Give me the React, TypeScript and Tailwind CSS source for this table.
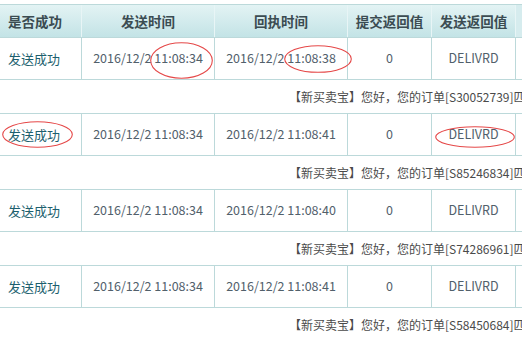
import React from "react";

const font = { fontFamily: '"Noto Sans CJK SC", "Noto Sans", sans-serif' };

const rows = [
  { send: "2016/12/2 11:08:34", recv: "2016/12/2 11:08:38", msg: "【新买卖宝】您好，您的订单[S30052739]匹配成功" },
  { send: "2016/12/2 11:08:34", recv: "2016/12/2 11:08:41", msg: "【新买卖宝】您好，您的订单[S85246834]匹配成功" },
  { send: "2016/12/2 11:08:34", recv: "2016/12/2 11:08:40", msg: "【新买卖宝】您好，您的订单[S74286961]匹配成功" },
  { send: "2016/12/2 11:08:34", recv: "2016/12/2 11:08:41", msg: "【新买卖宝】您好，您的订单[S58450684]匹配成功" },
];

function Ellipse({ x, y, w, h }: { x: number; y: number; w: number; h: number }) {
  return (
    <svg className="absolute pointer-events-none" style={{ left: x, top: y }} width={w} height={h}>
      <ellipse cx={w / 2} cy={h / 2} rx={w / 2 - 0.7} ry={h / 2 - 0.7} fill="none" stroke="#e54848" strokeWidth="1.1" />
    </svg>
  );
}

export default function App() {
  return (
    <div className="relative w-[522px] h-[339px] overflow-hidden bg-white pt-[4px] text-[13px]" style={font}>
      <div className="flex h-[34px] border-y border-[#bcd9da] bg-gradient-to-b from-[#e3f3f4] to-[#c3e3e6] font-bold text-[#3b4c52] text-[13.5px]">
        <div className="w-[82px] shrink-0 border-r border-[#e8f5f6] flex items-center pl-[8px]">是否成功</div>
        <div className="w-[133px] shrink-0 border-r border-[#e8f5f6] flex items-center justify-center">发送时间</div>
        <div className="w-[133px] shrink-0 border-r border-[#e8f5f6] flex items-center justify-center">回执时间</div>
        <div className="w-[84px] shrink-0 border-r border-[#e8f5f6] flex items-center justify-center">提交返回值</div>
        <div className="w-[84px] shrink-0 border-r border-[#e8f5f6] flex items-center justify-center">发送返回值</div>
        <div className="flex-1 bg-[#d6ecee]"></div>
      </div>
      {rows.map((r, i) => (
        <React.Fragment key={i}>
          <div className="flex h-[42px] border-b border-[#bcd9da] text-[#51606b] text-[12.5px]">
            <div className="w-[82px] shrink-0 border-r border-[#bcd9da] flex items-center pl-[8px] text-[#1d5f6e] text-[13px]">发送成功</div>
            <div className="w-[133px] shrink-0 border-r border-[#bcd9da] flex items-center justify-center">{r.send}</div>
            <div className="w-[133px] shrink-0 border-r border-[#bcd9da] flex items-center justify-center">{r.recv}</div>
            <div className="w-[84px] shrink-0 border-r border-[#bcd9da] flex items-center justify-center">0</div>
            <div className="w-[84px] shrink-0 border-r border-[#bcd9da] flex items-center justify-center">DELIVRD</div>
            <div className="flex-1"></div>
          </div>
          <div className="flex h-[34px] border-b border-[#bcd9da] items-center pl-[289px] whitespace-nowrap overflow-hidden text-[#4a4a4a] text-[12px]">
            {r.msg}
          </div>
        </React.Fragment>
      ))}
      <Ellipse x={150} y={42} w={63} h={37} />
      <Ellipse x={284} y={45} w={68} h={28} />
      <Ellipse x={2} y={121} w={71} h={27} />
      <Ellipse x={435} y={126} w={80} h={22} />
    </div>
  );
}
